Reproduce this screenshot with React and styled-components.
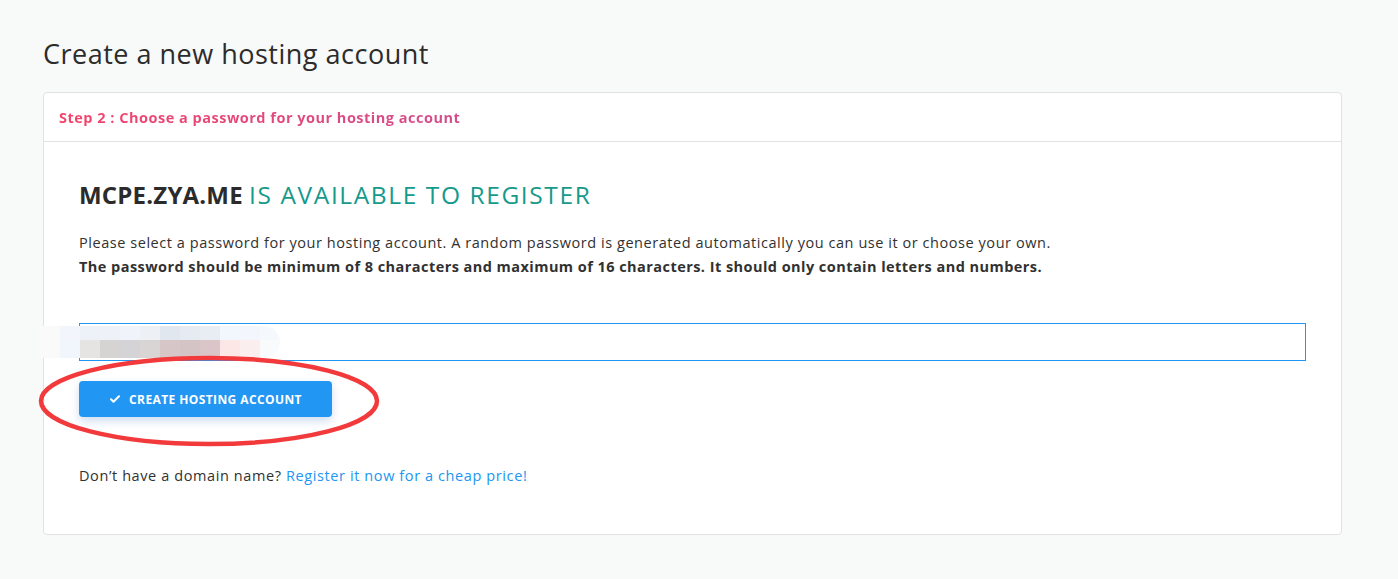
import React from 'react'
import styled, { createGlobalStyle } from 'styled-components'

const GlobalStyle = createGlobalStyle`
  html, body { margin: 0; padding: 0; }
  body {
    background: #f8f9f9;
    font-family: "Open Sans", "Lato", sans-serif;
    color: #313131;
  }
`

const Page = styled.div`
  padding: 36px 56px 40px 43px;
`

const Title = styled.h1`
  margin: 0 0 20px;
  font-size: 27px;
  font-weight: 400;
  letter-spacing: 0.5px;
  color: #2c2c2c;
  line-height: 36px;
`

const Card = styled.div`
  background: #fff;
  border: 1px solid #e2e2e2;
  border-radius: 4px;
`

const CardHeader = styled.div`
  height: 48px;
  display: flex;
  align-items: center;
  padding: 0 15px;
  border-bottom: 1px solid #e2e2e2;
`

const StepText = styled.span`
  font-size: 14.5px;
  font-weight: 700;
  letter-spacing: 0.5px;
  background: linear-gradient(90deg, #f5426a 0%, #d24d8c 100%);
  -webkit-background-clip: text;
  background-clip: text;
  color: transparent;
`

const CardBody = styled.div`
  padding: 37px 35px 49px 35px;
`

const Heading = styled.h2`
  margin: 0 0 20px;
  font-size: 24px;
  line-height: 32px;
  font-weight: 400;
  color: #159a8c;
`

const Domain = styled.strong`
  color: #2b2b2b;
  font-weight: 700;
  letter-spacing: 0.2px;
`

const Available = styled.span`
  font-size: 24.5px;
  letter-spacing: 1.6px;
`

const Text = styled.p`
  margin: 0;
  font-size: 14.5px;
  line-height: 24px;
  color: #313131;
  letter-spacing: ${p => (p.$bold ? '0.45px' : '0.55px')};
  font-weight: ${p => (p.$bold ? 700 : 400)};
`

const InputWrap = styled.div`
  position: relative;
  margin-top: 44px;
`

const PasswordInput = styled.input`
  display: block;
  box-sizing: border-box;
  width: 100%;
  height: 38px;
  border: 1px solid #2196f3;
  border-radius: 0;
  outline: none;
  background: #fff;
  padding: 0 12px;
`

const Mosaic = styled.div`
  position: absolute;
  left: -39px;
  top: 3px;
  display: grid;
  grid-template-columns: repeat(12, 20px);
  grid-template-rows: 14px 18px;
  border-radius: 0 16px 16px 0;
  overflow: hidden;
  filter: blur(0.6px);
`

const Tile = styled.div`
  background: ${p => p.$c};
`

const ButtonWrap = styled.div`
  position: relative;
  margin-top: 20px;
  display: inline-block;
`

const Button = styled.button`
  display: inline-flex;
  align-items: center;
  justify-content: center;
  gap: 8px;
  width: 253px;
  height: 36px;
  border: none;
  border-radius: 4px;
  background: #2196f3;
  color: #fff;
  font-family: "Open Sans", sans-serif;
  font-size: 12px;
  font-weight: 700;
  letter-spacing: 0.4px;
  text-transform: uppercase;
  box-shadow: 0 4px 10px rgba(33, 100, 180, 0.22);
  cursor: pointer;
`

const Ellipse = styled.svg`
  position: absolute;
  left: -40px;
  top: -27px;
  pointer-events: none;
  overflow: visible;
`

const Footer = styled.p`
  margin: 49px 0 0;
  font-size: 14.5px;
  letter-spacing: 0.6px;
  color: #313131;
`

const Link = styled.a`
  color: #2196f3;
  text-decoration: none;
`

const row1 = ['#fafafa', '#f2f6fc', '#edf2f9', '#eef2f8', '#f0f4fa', '#edf1f6', '#e0e7ee', '#e6ebf2', '#e8ecf3', '#f2f6fd', '#f3f7fd', '#f5f8fd']
const row2 = ['#fafafa', '#f1f6fd', '#e6e4e3', '#d6d4d3', '#d4d4d6', '#d8d5d4', '#d6c6c8', '#d4c4c6', '#dac6c8', '#fde6e6', '#fbeeee', '#f9fafc']

const Check = () => (
  <svg width="12" height="12" viewBox="0 0 24 24" fill="none" stroke="#fff" strokeWidth="4" strokeLinecap="round" strokeLinejoin="round">
    <path d="M4 12.5l5 5L20 6.5" />
  </svg>
)

export default function App() {
  return (
    <>
      <GlobalStyle />
      <Page>
        <Title>Create a new hosting account</Title>
        <Card>
          <CardHeader>
            <StepText>Step 2 : Choose a password for your hosting account</StepText>
          </CardHeader>
          <CardBody>
            <Heading>
              <Domain>MCPE.ZYA.ME</Domain> <Available>IS AVAILABLE TO REGISTER</Available>
            </Heading>
            <Text>
              Please select a password for your hosting account. A random password is generated automatically you can use it or choose your own.
            </Text>
            <Text $bold>
              The password should be minimum of 8 characters and maximum of 16 characters. It should only contain letters and numbers.
            </Text>

            <InputWrap>
              <PasswordInput type="text" defaultValue="" />
              {/* blurred-out password */}
              <Mosaic>
                {row1.concat(row2).map((c, i) => <Tile key={i} $c={c} />)}
              </Mosaic>
            </InputWrap>

            <ButtonWrap>
              <Button>
                <Check /> Create hosting account
              </Button>
              <Ellipse width="340" height="92">
                <ellipse cx="170" cy="47" rx="168" ry="43" fill="none" stroke="#f23a3c" strokeWidth="4.5" />
              </Ellipse>
            </ButtonWrap>

            <Footer>
              Don&rsquo;t have a domain name? <Link href="#">Register it now for a cheap price!</Link>
            </Footer>
          </CardBody>
        </Card>
      </Page>
    </>
  )
}
